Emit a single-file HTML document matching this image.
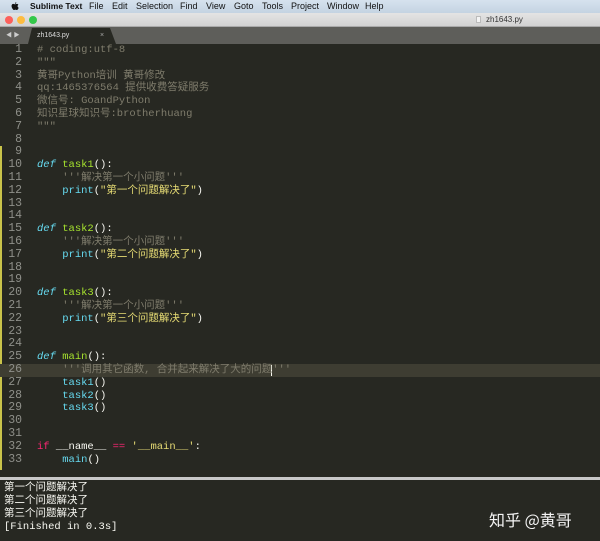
<!DOCTYPE html><html><head><meta charset="utf-8"><style>
*{margin:0;padding:0;box-sizing:border-box}
body{width:600px;height:541px;overflow:hidden;background:#272822;font-family:"Liberation Sans","Noto Sans CJK SC",sans-serif;position:relative}
#menu{position:absolute;left:0;top:0;width:600px;height:13px;background:linear-gradient(#d6e2ee,#c4d3e2);font-size:9px;color:#111;line-height:13px}
#menu span{position:absolute;top:0}
#title{position:absolute;top:13px;left:0;width:600px;height:14px;background:linear-gradient(#e4e4e4,#d2d2d2);border-bottom:1px solid #aaa;font-size:8px;color:#333;line-height:14px}
.dot{position:absolute;top:3px;width:8px;height:8px;border-radius:50%}
#tabs{position:absolute;top:27px;left:0;width:600px;height:17px;background:#5e5e5a}
#tab{position:absolute;left:28px;top:1px;width:88px;height:16px;background:#272822;clip-path:polygon(4px 0,82px 0,88px 100%,0 100%);font-size:7px;color:#ddd;line-height:16px}
#ed{position:absolute;top:44px;left:0;width:600px;height:432px;background:#272822}
.l{position:absolute;left:0;width:600px;height:12.8px;line-height:12.8px;font-family:"Liberation Mono","Noto Sans CJK SC",monospace;font-size:10.5px;white-space:pre;color:#f8f8f2}
.n{position:absolute;left:0;width:22px;text-align:right;color:#8f908a;font-size:11.5px}
.c{position:absolute;left:37px}
.cm{color:#7f7c6c}.k{color:#66d9ef;font-style:italic}.f{color:#a6e22e}.s{color:#e6db74}.b{color:#66d9ef}.r{color:#f92672}
#out{position:absolute;top:477px;left:0;width:600px;height:64px;background:#272822;border-top:3px solid #c8c8c8}
#out div{position:absolute;left:4px;font-family:"Liberation Mono","Noto Sans CJK SC",monospace;font-size:10.5px;color:#f8f8f2;line-height:13px}
</style></head><body>
<div id="menu"><svg style="position:absolute;left:11px;top:2px" width="8" height="9" viewBox="0 0 8 9"><path d="M5.3 0.2c0 .8-.6 1.6-1.4 1.6 0-.8.6-1.5 1.4-1.6zM4 2.3c.5 0 1-.4 1.6-.4.4 0 1.3.1 1.8.9-1.2.7-1 2.5.3 3-.3.8-.9 2.2-1.8 2.2-.6 0-.8-.4-1.5-.4s-.9.4-1.5.4C2 8 0.3 5.300.6 3.500 .9 2 2 1.900 2.400 1.900 3 1.900 3.500 2.300 4 2.300z" fill="#111"/></svg><span style="left:30px;font-weight:bold;font-size:8.5px">Sublime Text</span><span style="left:89px">File</span><span style="left:112px">Edit</span><span style="left:136px">Selection</span><span style="left:180px">Find</span><span style="left:206px">View</span><span style="left:234px">Goto</span><span style="left:262px">Tools</span><span style="left:291px">Project</span><span style="left:327px">Window</span><span style="left:365px">Help</span></div>
<div id="title"><div class="dot" style="left:5px;background:#fc605b"></div><div class="dot" style="left:17px;background:#fdbc40"></div><div class="dot" style="left:29px;background:#34c84a"></div><span style="position:absolute;left:476px;top:3px;width:5px;height:7px;background:#f4f4f4;border:1px solid #bbb"></span><span style="position:absolute;left:486px">zh1643.py</span></div>
<div id="tabs"><span style="position:absolute;left:6px;top:3px;font-size:6px;color:#ccc">◀ ▶</span><div id="tab"><span style="position:absolute;left:9px">zh1643.py</span><span style="position:absolute;left:72px;color:#aaa">×</span></div></div>
<div id="ed">
<div style="position:absolute;left:0;top:102px;width:2px;height:324px;background:#c9c34a"></div>
<div style="position:absolute;left:0;top:320px;width:600px;height:13px;background:#3e3d32"></div>
<div style="position:absolute;left:271px;top:321px;width:1px;height:11px;background:#f8f8f0"></div>
</div>
<div id="code" style="position:absolute;top:44px;left:0">
<div class="l" style="top:0"><span class="n">1</span><span class="c cm"># coding:utf-8</span></div>
<div class="l" style="top:12.8px"><span class="n">2</span><span class="c cm">"""</span></div>
<div class="l" style="top:25.6px"><span class="n">3</span><span class="c cm">黄哥Python培训 黄哥修改</span></div>
<div class="l" style="top:38.4px"><span class="n">4</span><span class="c cm">qq:1465376564 提供收费答疑服务</span></div>
<div class="l" style="top:51.2px"><span class="n">5</span><span class="c cm">微信号: GoandPython</span></div>
<div class="l" style="top:64px"><span class="n">6</span><span class="c cm">知识星球知识号:brotherhuang</span></div>
<div class="l" style="top:76.8px"><span class="n">7</span><span class="c cm">"""</span></div>
<div class="l" style="top:89.6px"><span class="n">8</span></div>
<div class="l" style="top:102.4px"><span class="n">9</span></div>
<div class="l" style="top:115.2px"><span class="n">10</span><span class="c"><span class="k">def</span> <span class="f">task1</span>():</span></div>
<div class="l" style="top:128px"><span class="n">11</span><span class="c cm">    '''解决第一个小问题'''</span></div>
<div class="l" style="top:140.8px"><span class="n">12</span><span class="c">    <span class="b">print</span>(<span class="s">"第一个问题解决了"</span>)</span></div>
<div class="l" style="top:153.6px"><span class="n">13</span></div>
<div class="l" style="top:166.4px"><span class="n">14</span></div>
<div class="l" style="top:179.2px"><span class="n">15</span><span class="c"><span class="k">def</span> <span class="f">task2</span>():</span></div>
<div class="l" style="top:192px"><span class="n">16</span><span class="c cm">    '''解决第一个小问题'''</span></div>
<div class="l" style="top:204.8px"><span class="n">17</span><span class="c">    <span class="b">print</span>(<span class="s">"第二个问题解决了"</span>)</span></div>
<div class="l" style="top:217.6px"><span class="n">18</span></div>
<div class="l" style="top:230.4px"><span class="n">19</span></div>
<div class="l" style="top:243.2px"><span class="n">20</span><span class="c"><span class="k">def</span> <span class="f">task3</span>():</span></div>
<div class="l" style="top:256px"><span class="n">21</span><span class="c cm">    '''解决第一个小问题'''</span></div>
<div class="l" style="top:268.8px"><span class="n">22</span><span class="c">    <span class="b">print</span>(<span class="s">"第三个问题解决了"</span>)</span></div>
<div class="l" style="top:281.6px"><span class="n">23</span></div>
<div class="l" style="top:294.4px"><span class="n">24</span></div>
<div class="l" style="top:307.2px"><span class="n">25</span><span class="c"><span class="k">def</span> <span class="f">main</span>():</span></div>
<div class="l" style="top:320px"><span class="n">26</span><span class="c cm">    '''调用其它函数, 合并起来解决了大的问题'''</span></div>
<div class="l" style="top:332.8px"><span class="n">27</span><span class="c">    <span class="b">task1</span>()</span></div>
<div class="l" style="top:345.6px"><span class="n">28</span><span class="c">    <span class="b">task2</span>()</span></div>
<div class="l" style="top:358.4px"><span class="n">29</span><span class="c">    <span class="b">task3</span>()</span></div>
<div class="l" style="top:371.2px"><span class="n">30</span></div>
<div class="l" style="top:384px"><span class="n">31</span></div>
<div class="l" style="top:396.8px"><span class="n">32</span><span class="c"><span class="r">if</span> __name__ <span class="r">==</span> <span class="s">'__main__'</span>:</span></div>
<div class="l" style="top:409.6px"><span class="n">33</span><span class="c">    <span class="b">main</span>()</span></div>
</div>
<div id="out">
<div style="top:2px">第一个问题解决了</div>
<div style="top:15px">第二个问题解决了</div>
<div style="top:28px">第三个问题解决了</div>
<div style="top:41px">[Finished in 0.3s]</div>
<span style="position:absolute;left:489px;top:27px;font-size:16px;color:#f4f4f4;font-family:'Noto Sans CJK SC',sans-serif">知乎 @黄哥</span>
</div>
</body></html>
